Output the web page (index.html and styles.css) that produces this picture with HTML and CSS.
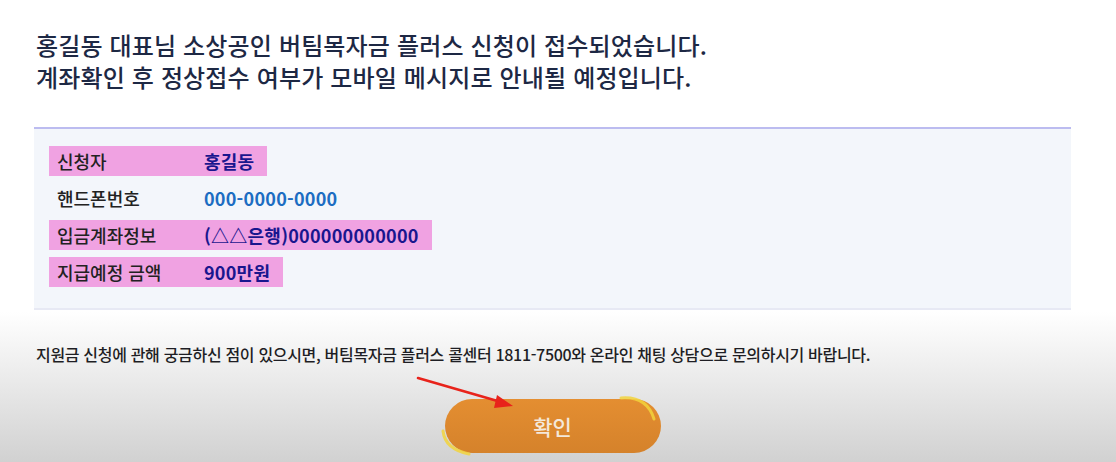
FILE: index.html
```html
<!DOCTYPE html>
<html lang="ko">
<head>
    <meta charset="UTF-8">
    <meta name="viewport" content="width=device-width, initial-scale=1.0">
    <title>버팀목자금 플러스 신청 완료</title>
    <link rel="stylesheet" href="styles.css">
</head>
<body>
    <div class="page">
        <h1 class="title">홍길동 대표님 소상공인 버팀목자금 플러스 신청이 접수되었습니다.<br>계좌확인 후 정상접수 여부가 모바일 메시지로 안내될 예정입니다.</h1>

        <div class="info-box">
            <div class="row mark">
                <span class="label">신청자</span>
                <span class="value">홍길동</span>
            </div>
            <div class="row">
                <span class="label">핸드폰번호</span>
                <span class="value phone">000-0000-0000</span>
            </div>
            <div class="row mark">
                <span class="label">입금계좌정보</span>
                <span class="value">(△△은행)000000000000</span>
            </div>
            <div class="row mark">
                <span class="label">지급예정 금액</span>
                <span class="value">900만원</span>
            </div>
        </div>

        <p class="notice">지원금 신청에 관해 궁금하신 점이 있으시면, 버팀목자금 플러스 콜센터 1811-7500와 온라인 채팅 상담으로 문의하시기 바랍니다.</p>

        <div class="btn-area">
            <div class="btn-wrap">
                <button type="button" class="btn-ok">확인</button>
                <!-- 강조 표시 (화살표, 형광펜) -->
                <svg class="marks" width="300" height="100" viewBox="0 0 300 100">
                    <path d="M216 29 Q242 27 249 50" fill="none" stroke="#f2d33c" stroke-width="3" stroke-linecap="round" opacity="0.85"/>
                    <path d="M38 62 Q40 80 64 85" fill="none" stroke="#f2d33c" stroke-width="3" stroke-linecap="round" opacity="0.85"/>
                    <line x1="13" y1="9" x2="96" y2="33" stroke="#e8231b" stroke-width="2.6" stroke-linecap="round"/>
                    <polygon points="108,37 92,26 89,39" fill="#e8231b"/>
                </svg>
            </div>
        </div>
    </div>
</body>
</html>
```

FILE: styles.css
```css
* {
    margin: 0;
    padding: 0;
    box-sizing: border-box;
}

body {
    font-family: "Noto Sans CJK KR", "Noto Sans", sans-serif;
    background: linear-gradient(to bottom, #ffffff 0, #ffffff 312px, #d1d1d1 462px);
    min-height: 100vh;
    color: #222;
}

.page {
    width: 1037px;
    margin-left: 34px;
    padding-top: 29px;
}

.title {
    font-size: 24px;
    font-weight: 500;
    line-height: 32px;
    letter-spacing: 0.15px;
    color: #1d2844;
    padding-left: 2px;
}

.info-box {
    margin-top: 34px;
    background: #f3f6fb;
    border-top: 2px solid #bcbcf0;
    border-bottom: 2px solid #e7e9f4;
    padding: 17px 15px 21px;
    display: flex;
    flex-direction: column;
    align-items: flex-start;
    gap: 7px;
}

.row {
    display: flex;
    align-items: center;
    height: 30px;
    padding-right: 13px;
    font-size: 18px;
    font-weight: 700;
    letter-spacing: 0.25px;
}

.row.mark {
    background: #f0a2e2;
}

.label {
    width: 155px;
    padding-left: 8px;
    color: #222;
    font-weight: 500;
    letter-spacing: 0;
}

.value {
    color: #19168e;
}

.value.phone {
    color: #1c6dc2;
}

.notice {
    margin-top: 34px;
    font-size: 16px;
    font-weight: 500;
    line-height: 20px;
    letter-spacing: -0.32px;
    color: #1e1e24;
    padding-left: 2px;
}

.btn-area {
    display: flex;
    justify-content: center;
    margin-top: 35px;
}

.btn-wrap {
    position: relative;
}

.btn-ok {
    display: block;
    width: 216px;
    height: 54px;
    border: none;
    border-radius: 27px;
    background: linear-gradient(to bottom, #e48e31, #d5822b);
    color: #f4e8da;
    font-family: "Noto Sans CJK KR", sans-serif;
    font-size: 21px;
    font-weight: 500;
    cursor: pointer;
}

.marks {
    position: absolute;
    left: -40px;
    top: -30px;
    pointer-events: none;
}
```
